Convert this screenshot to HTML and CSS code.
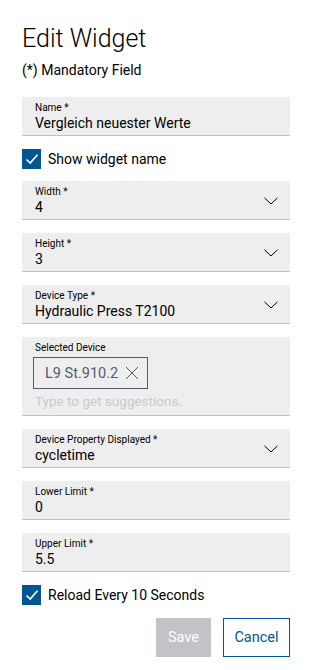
FILE: index.html
```html
<!DOCTYPE html>
<html>

<head>
	<meta charset="utf-8">
	<link rel="stylesheet" href="styles.css">
</head>

<body>
	<div class="dialog">
		<h1 class="title">Edit Widget</h1>
		<p class="hint">(*) Mandatory Field</p>

		<div class="field">
			<div class="label">Name *</div>
			<div class="value">Vergleich neuester Werte</div>
		</div>

		<div class="check">
			<span class="box">
				<svg width="14" height="14" viewBox="0 0 14 14"><path d="M1.5 7.5 L5.2 11 L12.5 2.8" fill="none" stroke="#fff" stroke-width="1.6"/></svg>
			</span>
			<span>Show widget name</span>
		</div>

		<div class="field select">
			<div class="label">Width *</div>
			<div class="value">4</div>
			<svg class="chevron" width="14" height="8" viewBox="0 0 14 8"><path d="M0.5 0.8 L7 7 L13.5 0.8" fill="none" stroke="#000" stroke-width="1"/></svg>
		</div>

		<div class="field select">
			<div class="label">Height *</div>
			<div class="value">3</div>
			<svg class="chevron" width="14" height="8" viewBox="0 0 14 8"><path d="M0.5 0.8 L7 7 L13.5 0.8" fill="none" stroke="#000" stroke-width="1"/></svg>
		</div>

		<div class="field select">
			<div class="label">Device Type *</div>
			<div class="value">Hydraulic Press T2100</div>
			<svg class="chevron" width="14" height="8" viewBox="0 0 14 8"><path d="M0.5 0.8 L7 7 L13.5 0.8" fill="none" stroke="#000" stroke-width="1"/></svg>
		</div>

		<div class="field tags">
			<div class="label">Selected Device</div>
			<div class="chip">
				<span>L9 St.910.2</span>
				<svg width="14" height="14" viewBox="0 0 14 14"><path d="M1 1 L13 13 M13 1 L1 13" fill="none" stroke="#525f6b" stroke-width="1"/></svg>
			</div>
			<div class="placeholder">Type to get suggestions.</div>
		</div>

		<div class="field select">
			<div class="label">Device Property Displayed *</div>
			<div class="value">cycletime</div>
			<svg class="chevron" width="14" height="8" viewBox="0 0 14 8"><path d="M0.5 0.8 L7 7 L13.5 0.8" fill="none" stroke="#000" stroke-width="1"/></svg>
		</div>

		<div class="field">
			<div class="label">Lower Limit *</div>
			<div class="value">0</div>
		</div>

		<div class="field">
			<div class="label">Upper Limit *</div>
			<div class="value">5.5</div>
		</div>

		<div class="check">
			<span class="box">
				<svg width="14" height="14" viewBox="0 0 14 14"><path d="M1.5 7.5 L5.2 11 L12.5 2.8" fill="none" stroke="#fff" stroke-width="1.6"/></svg>
			</span>
			<span>Reload Every 10 Seconds</span>
		</div>

		<div class="actions">
			<button type="button" class="button save">Save</button>
			<button type="button" class="button cancel">Cancel</button>
		</div>
	</div>
</body>

</html>
```

FILE: styles.css
```css
body {
	margin: 0;
	background-color: #ffffff;
	font-family: Roboto, "Noto Sans", sans-serif;
	color: #000000;
}

.dialog {
	padding: 23px 21px 0 22px;
}

.title {
	margin: 0;
	font-size: 25px;
	font-weight: 300;
	line-height: 32px;
}

.hint {
	margin: 6px 0 0 0;
	font-size: 14px;
	line-height: 18px;
}

.field {
	position: relative;
	margin-top: 13px;
	padding: 4px 13px 0 13px;
	height: 34px;
	background-color: #eeeeee;
	border-bottom: 1px solid #bfc0c2;
}

.hint + .field {
	margin-top: 18px;
}

.label {
	font-size: 10px;
	line-height: 13px;
}

.value {
	font-size: 14px;
	line-height: 18px;
}

.chevron {
	position: absolute;
	right: 12px;
	top: 16px;
}

.tags {
	height: 74px;
}

.chip {
	display: inline-flex;
	align-items: center;
	gap: 7px;
	margin: 3px 0 0 -2px;
	padding: 0 8px 0 11px;
	height: 30px;
	border: 1px solid #525f6b;
	color: #525f6b;
	font-size: 14.5px;
}

.placeholder {
	margin-top: 3px;
	font-size: 13.5px;
	line-height: 18px;
	color: #c8cacc;
}

.check {
	display: flex;
	align-items: center;
	gap: 7px;
	margin-top: 13px;
	height: 20px;
	font-size: 14px;
}

.check + .field {
	margin-top: 12px;
}

.box {
	display: flex;
	align-items: center;
	justify-content: center;
	width: 19px;
	height: 20px;
	background-color: #005691;
}

.actions {
	display: flex;
	justify-content: flex-end;
	gap: 12px;
	margin-top: 13px;
}

.button {
	height: 39px;
	font: 14.5px Roboto, "Noto Sans", sans-serif;
	border-radius: 0;
}

.save {
	width: 55px;
	border: none;
	color: #ffffff;
	background-color: #c1c3c6;
}

.cancel {
	width: 67px;
	border: 1px solid #005691;
	color: #005691;
	background-color: #ffffff;
}
```
